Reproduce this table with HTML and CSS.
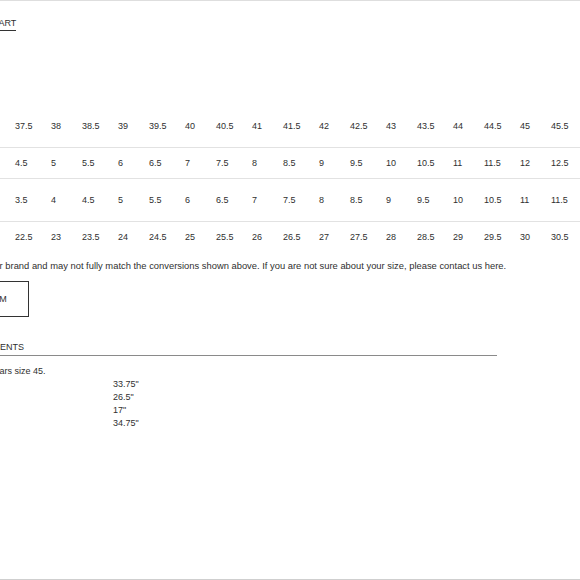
FILE: index.html
```html
<!DOCTYPE html>
<html lang="en">
<head>
<meta charset="utf-8">
<title>Size chart</title>
<link rel="stylesheet" href="styles.css">
</head>
<body>
<div class="frame">
  <div class="page">
    <div class="tabs">
      <span class="tab active">SIZE CHART</span>
    </div>

    <div class="chart">
      <div class="row r1">
        <div class="label">EU / FR / IT</div>
        <div class="c">37.5</div><div class="c">38</div><div class="c">38.5</div><div class="c">39</div><div class="c">39.5</div><div class="c">40</div><div class="c">40.5</div><div class="c">41</div><div class="c">41.5</div><div class="c">42</div><div class="c">42.5</div><div class="c">43</div><div class="c">43.5</div><div class="c">44</div><div class="c">44.5</div><div class="c">45</div><div class="c">45.5</div>
      </div>
      <div class="row r2">
        <div class="label">US</div>
        <div class="c">4.5</div><div class="c">5</div><div class="c">5.5</div><div class="c">6</div><div class="c">6.5</div><div class="c">7</div><div class="c">7.5</div><div class="c">8</div><div class="c">8.5</div><div class="c">9</div><div class="c">9.5</div><div class="c">10</div><div class="c">10.5</div><div class="c">11</div><div class="c">11.5</div><div class="c">12</div><div class="c">12.5</div>
      </div>
      <div class="row r3">
        <div class="label">UK</div>
        <div class="c">3.5</div><div class="c">4</div><div class="c">4.5</div><div class="c">5</div><div class="c">5.5</div><div class="c">6</div><div class="c">6.5</div><div class="c">7</div><div class="c">7.5</div><div class="c">8</div><div class="c">8.5</div><div class="c">9</div><div class="c">9.5</div><div class="c">10</div><div class="c">10.5</div><div class="c">11</div><div class="c">11.5</div>
      </div>
      <div class="row r4">
        <div class="label">CM</div>
        <div class="c">22.5</div><div class="c">23</div><div class="c">23.5</div><div class="c">24</div><div class="c">24.5</div><div class="c">25</div><div class="c">25.5</div><div class="c">26</div><div class="c">26.5</div><div class="c">27</div><div class="c">27.5</div><div class="c">28</div><div class="c">28.5</div><div class="c">29</div><div class="c">29.5</div><div class="c">30</div><div class="c">30.5</div>
      </div>
    </div>

    <p class="note">Sizes refer to the manufacturer brand and may not fully match the conversions shown above. If you are not sure about your size, please contact us here.</p>

    <div class="actions">
      <a class="btn">CONTACT FORM</a>
    </div>

    <div class="section">
      <div class="section-head"><span class="section-title">MEASUREMENTS</span></div>
      <p class="model">The model wears size 45.</p>
      <dl class="measures">
        <dt>Total length</dt><dd>33.75"</dd>
        <dt>Inseam</dt><dd>26.5"</dd>
        <dt>Waist</dt><dd>17"</dd>
        <dt>Hip</dt><dd>34.75"</dd>
      </dl>
    </div>
  </div>
</div>
</body>
</html>
```

FILE: styles.css
```css
html, body {
  margin: 0;
  padding: 0;
  background: #fff;
}

body {
  font-family: "Liberation Sans", Arial, sans-serif;
  font-size: 9px;
  color: #2f2f2f;
  overflow: hidden;
}

.frame {
  box-sizing: border-box;
  height: 580px;
  border-top: 1px solid #dedede;
  border-bottom: 1px solid #cfcfcf;
  overflow: hidden;
}

.page {
  margin-left: -140px;
  padding-left: 15px;
  width: 860px;
}

.tabs {
  padding-top: 17px;
  padding-left: 88px;
  line-height: 11px;
}

.tab {
  display: inline-block;
  padding-bottom: 1px;
  border-bottom: 1px solid #333;
}

.chart {
  margin-top: 75px;
}

.row {
  display: grid;
  grid-template-columns: 140px repeat(8, 36px 31px) 36px;
  align-items: center;
  border-bottom: 1px solid #e2e2e2;
  line-height: 11px;
}

.row.r1 { height: 41px; }
.row.r2 { height: 30px; }
.row.r3 { height: 42px; }
.row.r4 { height: 30px; border-bottom: 0; }

.label {
  padding-left: 10px;
}

.note {
  margin: 7px 0 0 -1px;
  font-size: 9.4px;
  line-height: 13px;
}

.actions {
  margin-top: 9px;
  padding-left: 33px;
}

.btn {
  display: inline-flex;
  align-items: center;
  box-sizing: border-box;
  height: 36px;
  padding: 0 21px 0 26px;
  border: 1px solid #333;
  color: #2f2f2f;
}

.section {
  margin-top: 25px;
  width: 622px;
}

.section-head {
  padding-left: 73px;
  line-height: 11px;
  padding-bottom: 2px;
  border-bottom: 1px solid #8a8a8a;
}

.model {
  margin: 9px 0 0;
  padding-left: 68px;
  line-height: 13px;
}

.measures {
  display: grid;
  grid-template-columns: 238px auto;
  margin: 0;
  line-height: 13px;
}

.measures dt {
  padding-left: 10px;
}

.measures dd {
  margin: 0;
}
```
